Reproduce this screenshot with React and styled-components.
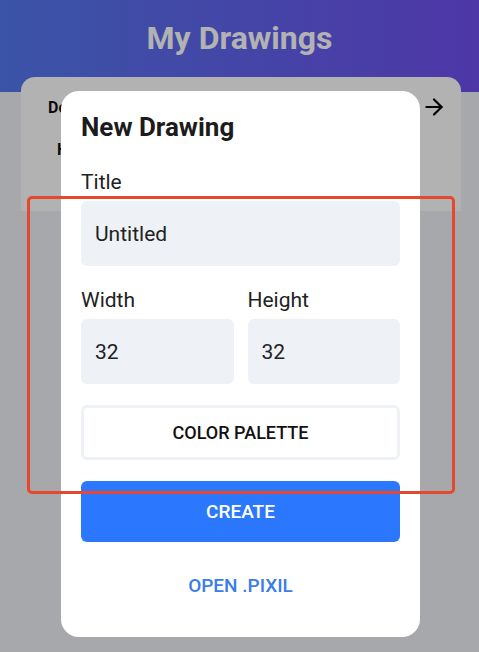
import styled, { createGlobalStyle } from 'styled-components';
import { ArrowRight } from 'lucide-react';

const GlobalStyle = createGlobalStyle`
  * { box-sizing: border-box; }
  body {
    margin: 0;
    background: #f0f1f5;
    font-family: Roboto, "Liberation Sans", sans-serif;
  }
`;

export default function App() {
  return (
    <>
      <GlobalStyle />
      <Page>
        <Header>
          <HeaderTitle>My Drawings</HeaderTitle>
        </Header>
        <DrawingCard>
          <CardRow>
            <CardName>Dog</CardName>
            <ArrowRight size={26} strokeWidth={2} color="#000" />
          </CardRow>
          <CardSize>H</CardSize>
        </DrawingCard>
      </Page>

      <Overlay>
        <Modal>
          <ModalTitle>New Drawing</ModalTitle>
          <Label>Title</Label>
          <Input defaultValue="Untitled" />
          <SizeRow>
            <Field>
              <Label>Width</Label>
              <Input defaultValue="32" />
            </Field>
            <Field>
              <Label>Height</Label>
              <Input defaultValue="32" />
            </Field>
          </SizeRow>
          <OutlineButton>COLOR PALETTE</OutlineButton>
          <PrimaryButton>CREATE</PrimaryButton>
          <LinkButton>OPEN .PIXIL</LinkButton>
        </Modal>
      </Overlay>

      <Annotation />
    </>
  );
}

const Page = styled.div`
  min-height: 652px;
`;

const Header = styled.header`
  height: 92px;
  background: linear-gradient(90deg, #5479f0 0%, #704ff0 100%);
  display: flex;
  justify-content: center;
  padding-top: 18px;
`;

const HeaderTitle = styled.h1`
  margin: 0;
  color: #fff;
  font-size: 32px;
  font-weight: 700;
  line-height: 40px;
`;

const DrawingCard = styled.div`
  margin: -15px 18px 0 21px;
  height: 134px;
  background: #fff;
  border-radius: 14px 14px 0 0;
  padding: 17px 14px 0 27px;
`;

const CardRow = styled.div`
  display: flex;
  justify-content: space-between;
  align-items: center;
`;

const CardName = styled.span`
  font-size: 16px;
  font-weight: 700;
  color: #111;
`;

const CardSize = styled.div`
  margin: 20px 0 0 9px;
  font-size: 16px;
  font-weight: 700;
  color: #111;
`;

const Overlay = styled.div`
  position: fixed;
  inset: 0;
  background: rgba(0, 0, 0, 0.3);
  display: flex;
  justify-content: center;
  align-items: flex-start;
  padding: 91px 0 0 2px;
`;

const Modal = styled.div`
  width: 359px;
  height: 546px;
  background: #fff;
  border-radius: 18px;
  padding: 22px 20px 0;
  display: flex;
  flex-direction: column;
`;

const ModalTitle = styled.h2`
  margin: 0 0 28px;
  font-size: 26px;
  font-weight: 700;
  line-height: 29px;
  color: #1c1c1c;
`;

const Label = styled.label`
  display: block;
  font-size: 21px;
  line-height: 24px;
  color: #222;
  margin-bottom: 7px;
`;

const Input = styled.input`
  width: 100%;
  height: 65px;
  border: none;
  outline: none;
  border-radius: 6px;
  background: #eef1f6;
  padding: 0 14px;
  font-family: inherit;
  font-size: 21px;
  color: #222;
`;

const SizeRow = styled.div`
  display: grid;
  grid-template-columns: 1fr 1fr;
  gap: 14px;
  margin-top: 22px;
`;

const Field = styled.div`
  display: flex;
  flex-direction: column;
`;

const OutlineButton = styled.button`
  margin-top: 21px;
  height: 55px;
  border: 3px solid #eef1f6;
  border-radius: 6px;
  background: #fff;
  font-family: inherit;
  font-size: 18px;
  font-weight: 500;
  color: #111;
`;

const PrimaryButton = styled.button`
  margin-top: 21px;
  height: 61px;
  border: none;
  border-radius: 6px;
  background: #2b78fe;
  font-family: inherit;
  font-size: 19px;
  font-weight: 500;
  color: #fff;
`;

const LinkButton = styled.button`
  margin-top: 28px;
  height: 30px;
  border: none;
  background: none;
  font-family: inherit;
  font-size: 19px;
  font-weight: 500;
  color: #3a7de8;
`;

const Annotation = styled.div`
  position: fixed;
  left: 27px;
  top: 196px;
  width: 428px;
  height: 298px;
  border: 3px solid #e5472f;
  border-radius: 5px;
  pointer-events: none;
`;
